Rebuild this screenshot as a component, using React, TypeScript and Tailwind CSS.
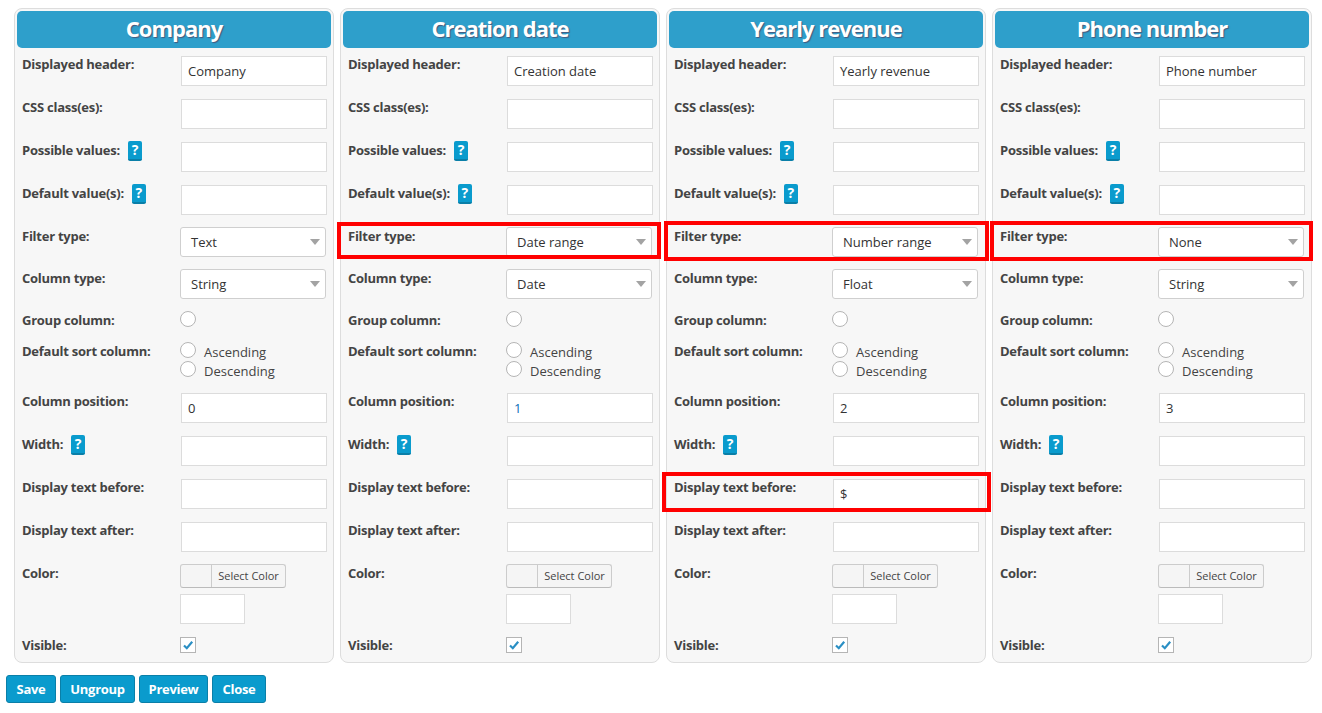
import type { ReactNode } from 'react'

type Column = {
	title: string
	filter: string
	columnType: string
	position: string
	positionBlue?: boolean
	before?: string
}

const columns: Column[] = [
	{ title: 'Company', filter: 'Text', columnType: 'String', position: '0' },
	{ title: 'Creation date', filter: 'Date range', columnType: 'Date', position: '1', positionBlue: true },
	{ title: 'Yearly revenue', filter: 'Number range', columnType: 'Float', position: '2', before: '$' },
	{ title: 'Phone number', filter: 'None', columnType: 'String', position: '3' },
]

function Help() {
	return (
		<span className="ml-[8px] inline-flex h-[20px] w-[14px] items-center justify-center rounded-[2px] border-b-2 border-[#0a7fa8] bg-[#0a9bcd] text-[14px] font-bold leading-none tracking-normal text-white">
			?
		</span>
	)
}

// Fila: etiqueta a la izquierda y control a la derecha
function Row({ label, help, tall, className, children }: { label: string; help?: boolean; tall?: boolean; className: string; children: ReactNode }) {
	return (
		<div className={`flex ${className}`}>
			<div className={`flex w-[163px] shrink-0 items-center whitespace-nowrap pl-[5px] text-[13px] font-bold tracking-[-0.25px] text-[#444444] ${tall ? 'h-[20px]' : 'h-[18px]'}`}>
				{label}
				{help && <Help />}
			</div>
			{children}
		</div>
	)
}

function TextInput({ value, blue }: { value?: string; blue?: boolean }) {
	return (
		<div className={`ml-[1px] flex h-[30px] w-[146px] items-center border border-[#dcdcdc] bg-white pl-[6px] pt-[2px] text-[13px] ${blue ? 'text-[#0d6fb8]' : 'text-[#333333]'}`}>
			{value}
		</div>
	)
}

function SelectBox({ value }: { value: string }) {
	return (
		<div className="flex h-[30px] w-[146px] items-center justify-between rounded-[3px] border border-[#cfcfcf] bg-white pl-[10px] pr-[5px] pt-[2px] text-[13px] text-[#333333]">
			{value}
			<span className="mb-[3px] h-0 w-0 border-x-[5px] border-t-[6px] border-x-transparent border-t-[#a3a3a3]" />
		</div>
	)
}

function Radio({ label }: { label?: string }) {
	return (
		<div className="flex h-[16px] items-center">
			<span className="h-[16px] w-[16px] rounded-full border border-[#b5b5b5] bg-white" />
			{label && <span className="ml-[8px] mt-[6px] text-[13px] text-[#444444]">{label}</span>}
		</div>
	)
}

function Panel({ col }: { col: Column }) {
	return (
		<section className="h-[655px] w-[320px] rounded-[8px] border border-[#dddddd] bg-[#f7f7f7] p-[2px]">
			<h2 className="flex h-[37px] items-center justify-center rounded-[5px] bg-[#2e9fcb] pb-[2px] text-[22px] font-bold tracking-[-1px] text-white [text-shadow:1px_1px_1px_rgba(90,30,60,0.55)]">
				{col.title}
			</h2>
			<Row label="Displayed header:" className="mt-[8px] h-[43px]">
				<TextInput value={col.title} />
			</Row>
			<Row label="CSS class(es):" className="h-[43px]">
				<TextInput />
			</Row>
			<Row label="Possible values:" help className="h-[43px]">
				<TextInput />
			</Row>
			<Row label="Default value(s):" help className="h-[42px]">
				<TextInput />
			</Row>
			<Row label="Filter type:" tall className="h-[42px]">
				<SelectBox value={col.filter} />
			</Row>
			<Row label="Column type:" tall className="h-[42px]">
				<SelectBox value={col.columnType} />
			</Row>
			<Row label="Group column:" tall className="h-[31px]">
				<Radio />
			</Row>
			<Row label="Default sort column:" tall className="h-[51px]">
				<div className="flex flex-col gap-[3px]">
					<Radio label="Ascending" />
					<Radio label="Descending" />
				</div>
			</Row>
			<Row label="Column position:" className="h-[43px]">
				<TextInput value={col.position} blue={col.positionBlue} />
			</Row>
			<Row label="Width:" help className="h-[43px]">
				<TextInput />
			</Row>
			<Row label="Display text before:" className="h-[43px]">
				<TextInput value={col.before} />
			</Row>
			<Row label="Display text after:" className="h-[42px]">
				<TextInput />
			</Row>
			<Row label="Color:" tall className="h-[73px]">
				<div className="flex flex-col gap-[6px]">
					<div className="flex h-[24px] w-[106px] rounded-[3px] border border-[#cccccc] border-b-[#bbbbbb] bg-[#f5f5f5]">
						<span className="w-[31px] border-r border-[#cccccc]" />
						<span className="flex-1 text-center text-[11px] leading-[22px] text-[#444444]">Select Color</span>
					</div>
					<div className="h-[30px] w-[65px] border border-[#dcdcdc] bg-white" />
				</div>
			</Row>
			<Row label="Visible:" className="">
				<span className="flex h-[16px] w-[16px] items-center justify-center border border-[#b5b5b5] bg-white">
					<svg viewBox="0 0 12 12" className="h-[12px] w-[12px]">
						<path d="M2 6.5 L4.8 9.2 L10.2 2.8" fill="none" stroke="#2a8fc4" strokeWidth="2.2" />
					</svg>
				</span>
			</Row>
		</section>
	)
}

function ActionButton({ label, width }: { label: string; width: string }) {
	return (
		<button className={`h-[28px] ${width} rounded-[3px] border border-[#0a7fa8] bg-[#0a9bcd] pt-[1px] text-[13px] font-bold tracking-[-0.3px] text-white`}>
			{label}
		</button>
	)
}

function Highlight({ className }: { className: string }) {
	return <div className={`pointer-events-none absolute border-[4px] border-[#ff0000] ${className}`} />
}

export default function App() {
	return (
		<div className="relative h-[713px] w-[1322px] overflow-hidden bg-white font-['Open_Sans',sans-serif]">
			<div className="flex gap-[6px] pl-[14px] pt-[8px]">
				{columns.map((col) => (
					<Panel key={col.title} col={col} />
				))}
			</div>
			<div className="ml-[6px] mt-[12px] flex gap-[4px]">
				<ActionButton label="Save" width="w-[50px]" />
				<ActionButton label="Ungroup" width="w-[75px]" />
				<ActionButton label="Preview" width="w-[69px]" />
				<ActionButton label="Close" width="w-[54px]" />
			</div>
			{/* Recuadros rojos sobre los campos destacados */}
			<Highlight className="left-[337px] top-[222px] h-[37px] w-[324px]" />
			<Highlight className="left-[664px] top-[221px] h-[40px] w-[325px]" />
			<Highlight className="left-[990px] top-[221px] h-[40px] w-[323px]" />
			<Highlight className="left-[662px] top-[472px] h-[40px] w-[329px]" />
		</div>
	)
}
